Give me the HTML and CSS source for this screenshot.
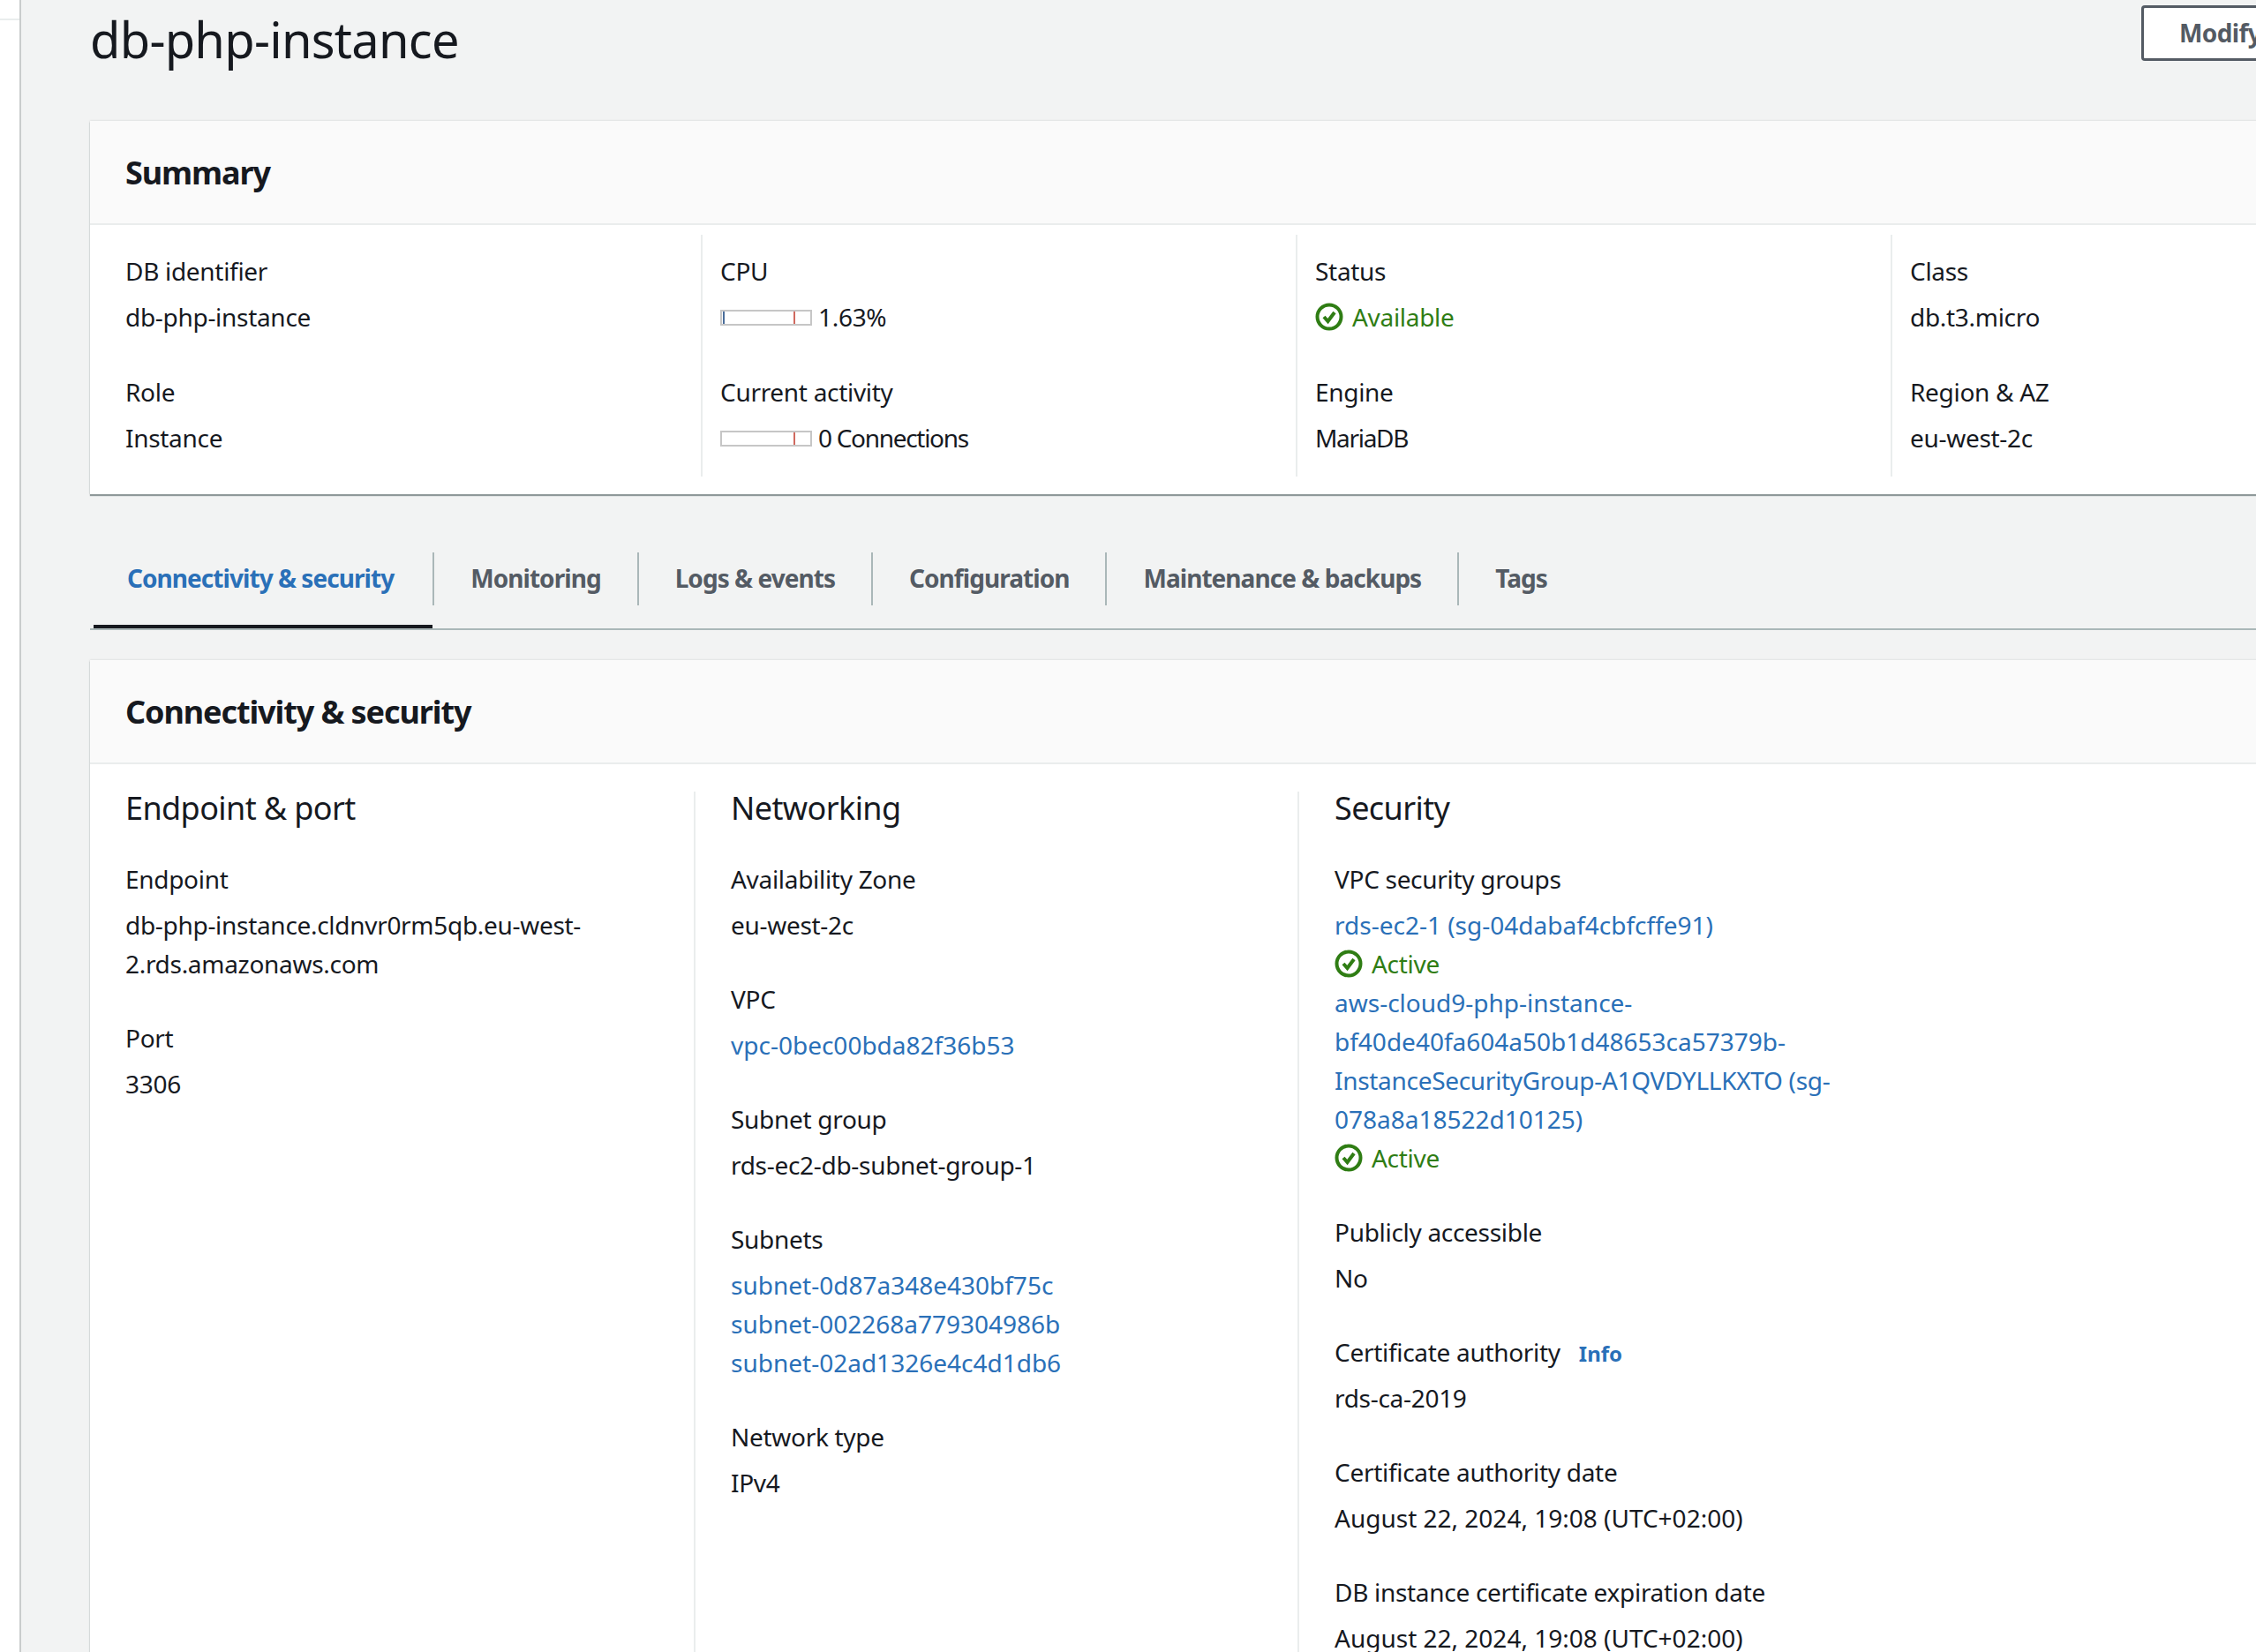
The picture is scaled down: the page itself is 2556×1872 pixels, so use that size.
FILE: index.html
```html
<!DOCTYPE html>
<html lang="en">
<head>
    <meta charset="UTF-8">
    <title>db-php-instance</title>
    <link rel="stylesheet" href="styles.css">
</head>
<body>
<svg class="defs" width="0" height="0">
    <symbol id="ok" viewBox="0 0 32 32">
        <circle cx="16" cy="16" r="13.5" fill="none" stroke="currentColor" stroke-width="4"/>
        <path d="M10 16l4.5 5 7.5-10" fill="none" stroke="currentColor" stroke-width="4"/>
    </symbol>
</svg>
<div id="pagina">
    <div id="lateral"><div id="lateral-linha"></div></div>
    <div id="conteudo">
        <div id="topo">
            <h1 id="titulo">db-php-instance</h1>
            <a id="modificar">Modify</a>
        </div>

        <div class="card">
            <h2 class="card-titulo">Summary</h2>
            <div id="resumo">
                <div class="resumo-coluna">
                    <div class="campo-curto"><div class="rotulo">DB identifier</div><div class="valor">db-php-instance</div></div>
                    <div class="campo-curto"><div class="rotulo">Role</div><div class="valor">Instance</div></div>
                </div>
                <div class="resumo-coluna">
                    <div class="campo-curto">
                        <div class="rotulo">CPU</div>
                        <div class="valor medidor-linha"><span class="medidor"><i class="medidor-uso"></i><i class="medidor-limite"></i></span>1.63%</div>
                    </div>
                    <div class="campo-curto">
                        <div class="rotulo">Current activity</div>
                        <div class="valor medidor-linha apertado"><span class="medidor"><i class="medidor-limite"></i></span>0 Connections</div>
                    </div>
                </div>
                <div class="resumo-coluna">
                    <div class="campo-curto">
                        <div class="rotulo">Status</div>
                        <div class="valor estado"><svg class="icone"><use href="#ok"/></svg>Available</div>
                    </div>
                    <div class="campo-curto"><div class="rotulo">Engine</div><div class="valor apertado">MariaDB</div></div>
                </div>
                <div class="resumo-coluna">
                    <div class="campo-curto"><div class="rotulo">Class</div><div class="valor">db.t3.micro</div></div>
                    <div class="campo-curto"><div class="rotulo">Region &amp; AZ</div><div class="valor">eu-west-2c</div></div>
                </div>
            </div>
        </div>

        <ul id="abas">
            <li class="aba ativa">Connectivity &amp; security</li>
            <li class="aba">Monitoring</li>
            <li class="aba">Logs &amp; events</li>
            <li class="aba">Configuration</li>
            <li class="aba">Maintenance &amp; backups</li>
            <li class="aba">Tags</li>
        </ul>

        <div class="card">
            <h2 class="card-titulo">Connectivity &amp; security</h2>
            <div id="detalhes">
                <div class="coluna">
                    <h3 class="coluna-titulo">Endpoint &amp; port</h3>
                    <div class="campo"><div class="rotulo">Endpoint</div><div class="valor">db-php-instance.cldnvr0rm5qb.eu-west-2.rds.amazonaws.com</div></div>
                    <div class="campo"><div class="rotulo">Port</div><div class="valor">3306</div></div>
                </div>
                <div class="coluna">
                    <h3 class="coluna-titulo">Networking</h3>
                    <div class="campo"><div class="rotulo">Availability Zone</div><div class="valor">eu-west-2c</div></div>
                    <div class="campo"><div class="rotulo">VPC</div><div class="valor"><a class="link">vpc-0bec00bda82f36b53</a></div></div>
                    <div class="campo"><div class="rotulo">Subnet group</div><div class="valor">rds-ec2-db-subnet-group-1</div></div>
                    <div class="campo">
                        <div class="rotulo">Subnets</div>
                        <div class="valor"><a class="link">subnet-0d87a348e430bf75c</a></div>
                        <div class="linha"><a class="link">subnet-002268a779304986b</a></div>
                        <div class="linha"><a class="link">subnet-02ad1326e4c4d1db6</a></div>
                    </div>
                    <div class="campo"><div class="rotulo">Network type</div><div class="valor">IPv4</div></div>
                </div>
                <div class="coluna">
                    <h3 class="coluna-titulo">Security</h3>
                    <div class="campo">
                        <div class="rotulo">VPC security groups</div>
                        <div class="valor"><a class="link">rds-ec2-1 (sg-04dabaf4cbfcffe91)</a></div>
                        <div class="linha estado"><svg class="icone"><use href="#ok"/></svg>Active</div>
                        <div class="linha"><a class="link">aws-cloud9-php-instance-bf40de40fa604a50b1d48653ca57379b-<span class="link-longo">InstanceSecurityGroup-A1QVDYLLKXTO (sg-</span>078a8a18522d10125)</a></div>
                        <div class="linha estado"><svg class="icone"><use href="#ok"/></svg>Active</div>
                    </div>
                    <div class="campo"><div class="rotulo">Publicly accessible</div><div class="valor">No</div></div>
                    <div class="campo"><div class="rotulo">Certificate authority <a class="info">Info</a></div><div class="valor">rds-ca-2019</div></div>
                    <div class="campo"><div class="rotulo">Certificate authority date</div><div class="valor data">August 22, 2024, 19:08 (UTC+02:00)</div></div>
                    <div class="campo"><div class="rotulo">DB instance certificate expiration date</div><div class="valor data">August 22, 2024, 19:08 (UTC+02:00)</div></div>
                </div>
            </div>
        </div>
    </div>
</div>
</body>
</html>
```

FILE: styles.css
```css
* {
    box-sizing: border-box;
}

body {
    margin: 0;
    height: 1872px;
    overflow: hidden;
    background-color: #fff;
    font-family: "Noto Sans", Arial, sans-serif;
    font-size: 28px;
    line-height: 44px;
    letter-spacing: -0.3px;
    color: #16191f;
}

.defs {
    position: absolute;
}

#pagina {
    display: flex;
    width: 2700px;
    height: 1872px;
}

#lateral {
    width: 22px;
    padding-top: 21px;
}
#lateral-linha {
    height: 2px;
    background-color: #eaeded;
}

#conteudo {
    width: 2580px;
    padding-left: 78px;
    border-left: 2px solid #c9cccc;
    background-color: #f2f3f3;
}

#topo {
    display: flex;
    justify-content: space-between;
    align-items: flex-start;
    height: 137px;
}
#titulo {
    margin: 0;
    font-size: 56px;
    font-weight: 400;
    line-height: 88px;
    letter-spacing: -0.75px;
}
#modificar {
    width: 176px;
    height: 63px;
    margin-top: 6px;
    padding-left: 40px;
    border: 3px solid #545b64;
    border-right: 0;
    border-radius: 4px 0 0 4px;
    background-color: #fff;
    font-weight: 700;
    line-height: 57px;
    letter-spacing: -0.6px;
    color: #545b64;
}

.card {
    background-color: #fff;
    box-shadow: 0 2px 1px #8f9899, 0 0 2px #c9cccc;
}
.card-titulo {
    height: 118px;
    margin: 0;
    padding-left: 40px;
    border-bottom: 2px solid #eaeded;
    background-color: #fafafa;
    font-size: 36px;
    font-weight: 700;
    line-height: 117px;
    letter-spacing: -1.1px;
}

#resumo {
    display: grid;
    grid-template-columns: repeat(4, 674px);
    padding: 11px 0 20px 18px;
}
.resumo-coluna {
    padding: 19px 0 22px 20px;
    border-left: 2px solid #eaeded;
}
.resumo-coluna:first-child {
    border-left-color: transparent;
}
.campo-curto {
    margin-bottom: 41px;
}
.campo-curto:last-child {
    margin-bottom: 0;
}

.rotulo {
    height: 44px;
    margin-bottom: 8px;
}
.apertado {
    letter-spacing: -1.3px;
}
.data {
    letter-spacing: 0;
}

.medidor-linha, .estado {
    display: flex;
    align-items: center;
}
.medidor {
    position: relative;
    width: 104px;
    height: 18px;
    margin: 2px 7px 0 0;
    border: 2px solid #c6c6c6;
}
.medidor i {
    position: absolute;
    top: 0;
    width: 2px;
    height: 14px;
}
.medidor-uso {
    left: 1px;
    background-color: #4a6d9a;
}
.medidor-limite {
    left: 81px;
    background-color: #d0695f;
}

.estado {
    color: #2f7d14;
}
.icone {
    width: 32px;
    height: 32px;
    margin-right: 10px;
}

#abas {
    position: relative;
    display: flex;
    height: 154px;
    margin: 0 0 34px;
    padding: 66px 0 0 4px;
    list-style: none;
    border-bottom: 2px solid #aab7b8;
    font-weight: 700;
    letter-spacing: -0.95px;
    color: #545b64;
}
.aba {
    height: 60px;
    padding: 0 41px;
    border-left: 2px solid #aab7b8;
    line-height: 58px;
}
.aba:first-child {
    padding: 0 44px 0 38px;
    border-left: 0;
}
.ativa {
    color: #2a70b8;
}
.ativa::after {
    content: "";
    position: absolute;
    left: 4px;
    bottom: 0;
    width: 384px;
    height: 4px;
    background-color: #16191f;
}

#detalhes {
    display: grid;
    grid-template-columns: 684px 684px 1fr;
    padding-top: 31px;
}
.coluna {
    min-height: 980px;
    padding-left: 40px;
    border-left: 2px solid #eaeded;
}
.coluna:first-child {
    border-left: 0;
}
.coluna-titulo {
    margin: 0 0 39px;
    font-size: 36px;
    font-weight: 400;
    line-height: 38px;
    letter-spacing: -0.6px;
}
.campo {
    max-width: 590px;
    margin-bottom: 40px;
}
.link, .info {
    letter-spacing: 0;
    color: #2a70b8;
}
.link-longo {
    letter-spacing: -0.3px;
}
.info {
    margin-left: 14px;
    font-size: 24px;
    line-height: 1;
    font-weight: 700;
}
```
